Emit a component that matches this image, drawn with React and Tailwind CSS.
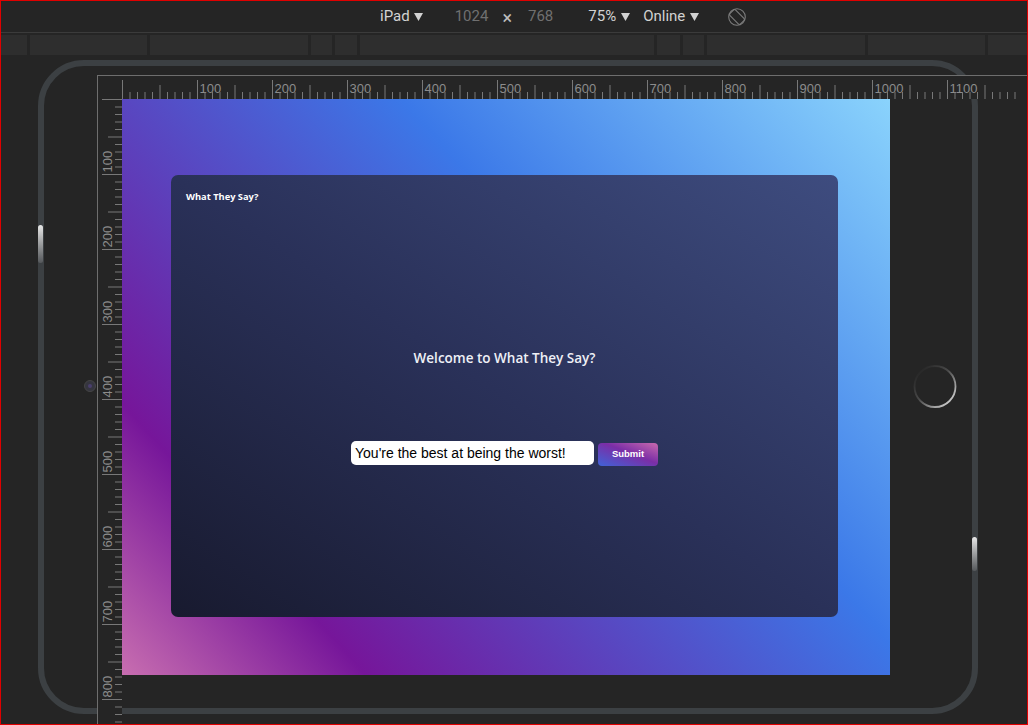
import React from 'react';

const MEDIA_SEGMENTS = [26, 117, 158, 21, 22, 294, 23, 21, 158, 117, 41];

function Caret() {
  return (
    <svg width="9" height="8" viewBox="0 0 9 8" className="shrink-0">
      <path d="M0 0 H9 L4.5 8 Z" fill="#d2d2d2" />
    </svg>
  );
}

function RotateIcon() {
  return (
    <svg width="20" height="20" viewBox="0 0 20 20">
      <circle cx="10" cy="10" r="8.3" fill="none" stroke="#7c7c7c" strokeWidth="1.1" />
      <rect x="6" y="2.6" width="8" height="14.8" rx="1.6" fill="none" stroke="#7c7c7c" strokeWidth="1.1" transform="rotate(-45 10 10)" />
    </svg>
  );
}

function HorizontalRuler() {
  const ticks = [];
  for (let i = 0; i <= 119; i++) {
    const x = i * 7.5 + 0.5;
    const major = i % 10 === 0;
    const mid = i % 5 === 0;
    const top = major ? 4 : mid ? 9 : 16;
    ticks.push(<line key={i} x1={x} x2={x} y1={top} y2={23} stroke="#787878" strokeWidth="1" />);
    if (major && i > 0) {
      ticks.push(
        <text key={'t' + i} x={x + 2} y={17} fontSize="13" fill="#8c8c8c" fontFamily="Liberation Sans, sans-serif">
          {i * 10}
        </text>
      );
    }
  }
  return (
    <svg width="906" height="23" className="block">
      {ticks}
    </svg>
  );
}

function VerticalRuler() {
  const ticks = [];
  for (let i = 0; i <= 84; i++) {
    const y = i * 7.5 + 0.5;
    const major = i % 10 === 0;
    const mid = i % 5 === 0;
    const left = major ? 4 : mid ? 10 : 17;
    ticks.push(<line key={i} x1={left} x2={24} y1={y} y2={y} stroke="#787878" strokeWidth="1" />);
    if (major && i > 0) {
      ticks.push(
        <text key={'t' + i} transform={`translate(14 ${y - 2}) rotate(-90)`} fontSize="13" fill="#8c8c8c" fontFamily="Liberation Sans, sans-serif">
          {i * 10}
        </text>
      );
    }
  }
  return (
    <svg width="24" height="626" className="block">
      {ticks}
    </svg>
  );
}

export default function App() {
  return (
    <div className="w-[1028px] h-[725px] bg-[#252525] border border-[#e00000] overflow-hidden flex flex-col font-['Roboto',sans-serif]">
      {/* Device toolbar */}
      <div className="h-[31px] shrink-0 flex items-center pl-[379px] text-[15px] text-[#d2d2d2]">
        <span>iPad</span>
        <span className="ml-[4px]"><Caret /></span>
        <span className="ml-[32px] text-[#707070]">1024</span>
        <span className="ml-[14px] mt-[3px] text-[18px] leading-none text-[#bdbdbd]">×</span>
        <span className="ml-[16px] text-[#707070]">768</span>
        <span className="ml-[35px]">75%</span>
        <span className="ml-[5px]"><Caret /></span>
        <span className="ml-[13px]">Online</span>
        <span className="ml-[5px]"><Caret /></span>
        <span className="ml-[28px] flex"><RotateIcon /></span>
      </div>
      <div className="h-px shrink-0 bg-[#3b3b3b]" />

      {/* Media query bar */}
      <div className="mt-[2px] h-[20px] shrink-0 flex gap-[3px]">
        {MEDIA_SEGMENTS.map((w, i) => (
          <div key={i} className="h-full bg-[#2e2e2e] shrink-0" style={{ width: w }} />
        ))}
      </div>

      {/* Device area */}
      <div className="relative flex-1">
        {/* iPad frame */}
        <div className="absolute left-[37px] top-[5px] w-[940px] h-[654px] rounded-[46px] border-[6px] border-[#3c4043]" />
        <div className="absolute left-[37px] top-[170px] w-[5px] h-[38px] rounded-sm bg-gradient-to-b from-[#e8e8e8] to-[#55585b]" />
        <div className="absolute left-[971px] top-[482px] w-[5px] h-[34px] rounded-sm bg-gradient-to-b from-[#e8e8e8] to-[#55585b]" />
        <svg className="absolute left-[911px] top-[309px]" width="46" height="46" viewBox="0 0 46 46">
          <defs>
            <linearGradient id="hb" x1="0.1" y1="0.1" x2="0.9" y2="0.9">
              <stop offset="0" stopColor="#252525" />
              <stop offset="0.45" stopColor="#4a4a4a" />
              <stop offset="1" stopColor="#d0d0d0" />
            </linearGradient>
          </defs>
          <circle cx="23" cy="22.5" r="20.5" fill="none" stroke="url(#hb)" strokeWidth="1.8" />
        </svg>
        <div className="absolute left-[83px] top-[325px] w-[12px] h-[12px] rounded-full bg-[#35353f] border border-[#454545] flex items-center justify-center">
          <div className="w-[4px] h-[4px] rounded-full bg-[#4a3f6e]" />
        </div>

        {/* Rulers + page */}
        <div className="relative ml-[96px] mt-[20px] grid grid-cols-[24px_906px] grid-rows-[23px_626px] border-l border-t border-[#6e6e6e]">
          <div className="bg-[#252525]" />
          <div className="bg-[#252525] overflow-hidden">
            <HorizontalRuler />
          </div>
          <div className="bg-[#252525]">
            <VerticalRuler />
          </div>
          <div>
            <div className="w-[768px] h-[576px] pt-[76px] pl-[49px] bg-[linear-gradient(48deg,#c86eb0_0%,#76169a_19%,#3b78e8_62%,#8ad3fc_100%)]">
              <div className="w-[667px] h-[442px] rounded-[7px] bg-[linear-gradient(to_top_right,#181a2f,#2a3159_50%,#3e4c7f)] flex flex-col font-['Open_Sans',sans-serif]">
                <div className="pt-[15px] pl-[15px] text-[9.3px] leading-[14px] font-bold text-white">What They Say?</div>
                <div className="mt-[144px] text-center text-[13.5px] leading-[20px] font-semibold text-[#eef0f6]">
                  Welcome to What They Say?
                </div>
                <div className="mt-[73px] flex justify-center items-start gap-[4px] font-['Liberation_Sans',sans-serif]">
                  <div className="w-[243px] h-[24px] bg-white rounded-[5px] pl-[4px] flex items-center text-[14px] text-black">
                    You're the best at being the worst!
                  </div>
                  <div className="mt-[2px] w-[60px] h-[23px] rounded-[4px] bg-[linear-gradient(to_top_right,#3f63d8,#7b2ea6_55%,#c86aae)] flex items-center justify-center text-[9.5px] font-bold text-white">
                    Submit
                  </div>
                </div>
              </div>
            </div>
          </div>
        </div>
      </div>
    </div>
  );
}
